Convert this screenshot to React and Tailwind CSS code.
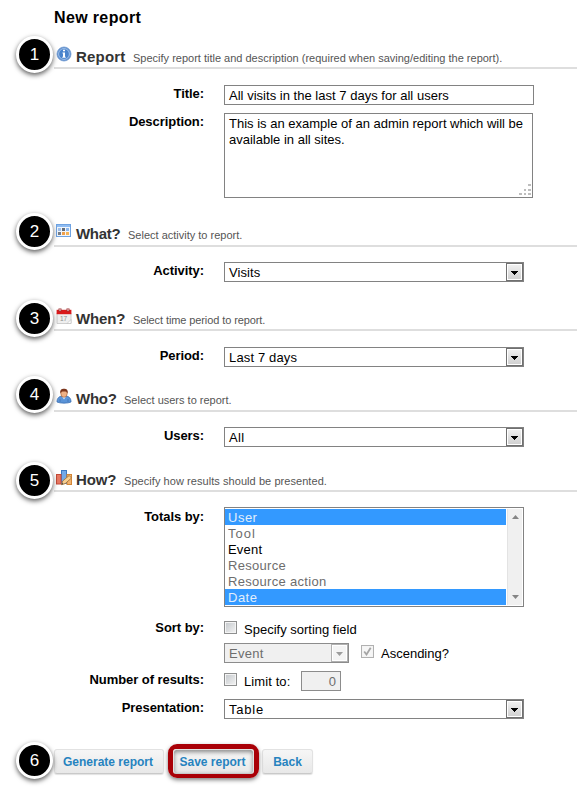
import React from "react";

const Badge = ({ n, top }) => (
  <div
    className={`absolute left-4 ${top} flex h-[37px] w-[37px] items-center justify-center rounded-full border-[3px] border-white bg-black text-[17px] leading-none text-white shadow-[0_2px_5px_rgba(0,0,0,0.65)]`}
  >
    {n}
  </div>
);

const InfoIcon = () => (
  <svg width="16" height="16" viewBox="0 0 16 16">
    <circle cx="8" cy="8" r="7" fill="#5d8fce" stroke="#6f98cf" strokeWidth="0.8" />
    <circle cx="8" cy="8" r="5.4" fill="#4a84cc" stroke="#a9c6ec" strokeWidth="0.9" />
    <path d="M7 3.8h2v1.500H7zM6.500 6.500H9v4.200h.7v1.100H6.300v-1.100H7V7.600h-.5z" fill="#fff" />
  </svg>
);

const TableIcon = () => (
  <svg width="16" height="16" viewBox="0 0 16 16" shapeRendering="crispEdges">
    <rect x="0" y="1" width="15" height="13" fill="#6fa3e2" />
    <rect x="1" y="2" width="13" height="2" fill="#8fbcf2" />
    <rect x="1" y="4" width="13" height="9" fill="#f1f6fc" />
    <rect x="2" y="5" width="3" height="3" fill="#9fc0ea" />
    <rect x="6" y="5" width="3" height="3" fill="#626b78" />
    <rect x="10" y="5" width="3" height="3" fill="#8db8ee" />
    <rect x="2" y="9" width="3" height="3" fill="#777e88" />
    <rect x="6" y="9" width="3" height="3" fill="#f0a04a" />
    <rect x="10" y="9" width="3" height="3" fill="#f5b357" />
  </svg>
);

const CalendarIcon = () => (
  <svg width="16" height="16" viewBox="0 0 16 16">
    <path d="M1 5h14v10.5H1z" fill="#efefef" stroke="#c4c4c4" strokeWidth="0.8" />
    <path d="M.6 1.800h14.800v4.400H.6z" fill="#d9191b" />
    <path d="M2.500.5h3v3h-3zM10.500.5h3v3h-3z" fill="#9d3436" />
    <path d="M3.500 1h1v2h-1zM11.500 1h1v2h-1z" fill="#f4dada" />
    <text x="4" y="13" fontSize="6.500" fill="#8e8e8e" fontFamily="Liberation Sans, sans-serif">17</text>
    <path d="M11 15.500l4-4v4z" fill="#fff" stroke="#bbb" strokeWidth="0.600" />
  </svg>
);

const UserIcon = () => (
  <svg width="16" height="16" viewBox="0 0 16 16">
    <path d="M1 14c0-4 2-5.500 5-6h4c3 .500 5 2 5 6-3 1.500-11 1.500-14 0z" fill="#5b94d8" stroke="#3a6fb2" strokeWidth="0.800" />
    <path d="M6 8.500l2 3 2-3z" fill="#dcebfa" />
    <path d="M4 11v3M12 11v3" stroke="#3a6fb2" strokeWidth="0.700" />
    <ellipse cx="8" cy="5.500" rx="3.200" ry="3.800" fill="#eeb186" stroke="#a55b2e" strokeWidth="0.600" />
    <path d="M4.300 5.500C3.700 2 5.500.700 8 .700s4.300 1.300 3.700 4.800C11 3.700 10 3.500 8 3.500s-3 .200-3.700 2z" fill="#7b351c" />
  </svg>
);

const ChartIcon = () => (
  <svg width="18" height="16" viewBox="0 0 18 16">
    <rect x="5.500" y="0.500" width="5" height="13" fill="#73a9e8" stroke="#3b78c4" />
    <rect x="0.500" y="4.500" width="4.500" height="9.500" fill="#e77862" stroke="#c44a38" />
    <rect x="11" y="4.500" width="4.500" height="10" fill="#f2b370" stroke="#d38637" />
    <path d="M5.500 14.700l1.200-3.700 6.500-5.500 2.300 2.500-6.300 5.600z" fill="#f7ce91" stroke="#a67538" strokeWidth="0.900" />
    <path d="M5.500 14.700l.6-1.900 1.300 1.300z" fill="#444" />
  </svg>
);

const Header = ({ icon, title, note, height, badge, badgeTop, iconClass, textClass }) => (
  <div className={`relative flex ${height} shrink-0 pl-[54px]`}>
    <div className="flex flex-1 items-end border-b-2 border-[#dedede]">
      <div className={`w-[22px] shrink-0 ${iconClass}`}>{icon}</div>
      <div className={`flex items-baseline whitespace-nowrap ${textClass}`}>
        {title}
        {note}
      </div>
    </div>
    <Badge n={badge} top={badgeTop} />
  </div>
);

const H = ({ children, className }) => (
  <h2 className={`shrink-0 text-[15px] font-bold leading-[18px] text-[#333] ${className}`}>{children}</h2>
);
const Note = ({ children, className = "" }) => (
  <span className={`text-[11px] leading-[14px] text-[#555] ${className}`}>{children}</span>
);

const Row = ({ label, className, labelClass = "pt-px", children }) => (
  <div className={`flex shrink-0 items-start ${className}`}>
    <div className={`w-[204px] shrink-0 whitespace-nowrap text-right text-[13px] font-bold leading-4 tracking-[-0.06px] text-black ${labelClass}`}>
      {label}
    </div>
    <div className="ml-5">{children}</div>
  </div>
);

const Select = ({ children, textClass = "" }) => (
  <div className="flex h-5 w-[300px] border border-[#828282] bg-white">
    <span className={`flex-1 pl-1 pt-px leading-[18px] ${textClass}`}>{children}</span>
    <span className="flex h-[18px] w-[17px] items-center justify-center border border-[#707070] bg-gradient-to-b from-[#f2f2f2] to-[#cfcfcf] shadow-[inset_0_0_0_1px_#fff]">
      <svg width="7" height="4" viewBox="0 0 7 4" className="mt-0.5">
        <path d="M0 0h7v1H6v1H5v1H4v1H3V3H2V2H1V1H0z" fill="#000" shapeRendering="crispEdges" />
      </svg>
    </span>
  </div>
);

const Check = ({ checked }) => (
  <span
    className={`flex h-[13px] w-[13px] shrink-0 items-center justify-center border shadow-[inset_0_0_0_1px_#f4f4f4] ${
      checked ? "border-[#b1b1b1] bg-[#f6f6f6]" : "border-[#8e8f8f] bg-gradient-to-br from-[#c3c7cb] to-[#f4f4f4]"
    }`}
  >
    {checked && (
      <svg width="9" height="9" viewBox="0 0 9 9">
        <path d="M1.200 4.500l2.300 3L7.700.8" fill="none" stroke="#a5a5a5" strokeWidth="1.800" />
      </svg>
    )}
  </span>
);

const options = [
  { name: "User", cls: "bg-[#3399ff] text-[#e2eefb] tracking-[0.5px]" },
  { name: "Tool", cls: "text-[#6d6d6d] tracking-[1px]" },
  { name: "Event", cls: "text-black tracking-[0.2px]" },
  { name: "Resource", cls: "text-[#6d6d6d] tracking-[0.3px]" },
  { name: "Resource action", cls: "text-[#6d6d6d] tracking-[0.3px]" },
  { name: "Date", cls: "bg-[#3399ff] text-[#e2eefb] tracking-[0.5px]" },
];

const Button = ({ children, className }) => (
  <button
    className={`h-[25px] shrink-0 whitespace-nowrap rounded-[3px] border border-[#e2e2e2] border-b-[#c9c9c9] bg-gradient-to-b from-[#f6f6f6] to-[#e8e8e8] text-[12px] font-bold leading-none text-[#2683bf] ${className}`}
  >
    {children}
  </button>
);

export default function App() {
  return (
    <div className="flex h-[790px] w-[577px] flex-col overflow-hidden bg-white font-['Liberation_Sans',Arial,sans-serif] text-[13px] text-black">
      <h1 className="h-[38px] shrink-0 pl-[54px] pt-2 text-[16px] font-bold leading-5 tracking-[0.36px]">New report</h1>

      <Header
        height="h-[31px]"
        badge="1"
        badgeTop="-top-0.5"
        icon={<InfoIcon />}
        iconClass="pl-0.5 pb-[5px]"
        textClass="pb-px"
        title={<H className="w-[57px] tracking-[0.2px]">Report</H>}
        note={<Note>Specify report title and description (required when saving/editing the report).</Note>}
      />
      <Row label="Title:" className="mt-4">
        <div className="h-5 w-[310px] border border-[#828282] pl-1 pt-px leading-[18px] tracking-[0.02px]">All visits in the last 7 days for all users</div>
      </Row>
      <Row label="Description:" className="mt-2">
        <div className="relative h-[85px] w-[309px] whitespace-nowrap border border-[#828282] pl-1 pt-0.5 leading-4">
          <div>This is an example of an admin report which will be</div>
          <div>available in all sites.</div>
          <svg width="12" height="12" viewBox="0 0 12 12" className="absolute bottom-px right-px" shapeRendering="crispEdges">
            <path d="M9 0h3v2H9zM5 5h2v2H5zM9 5h3v2H9zM0 9h3v2H0zM5 9h2v2H5zM9 9h3v2H9z" fill="#bdbdbd" />
          </svg>
        </div>
      </Row>

      <Header
        height="mt-[22px] h-[27px]"
        badge="2"
        badgeTop="-top-[7px]"
        icon={<TableIcon />}
        iconClass="pl-0.5 pb-1.5"
        textClass="pb-0.5"
        title={<H className="w-[52px] tracking-[-0.3px]">What?</H>}
        note={<Note>Select activity to report.</Note>}
      />
      <Row label="Activity:" className="mt-[15px]">
        <Select textClass="tracking-[0.1px]">Visits</Select>
      </Row>

      <Header
        height="mt-[22px] h-[27px]"
        badge="3"
        badgeTop="-top-[4px]"
        icon={<CalendarIcon />}
        iconClass="pl-0.5 pb-[5px]"
        textClass="pb-px"
        title={<H className="w-[57px] tracking-[-0.15px]">When?</H>}
        note={<Note className="tracking-[-0.1px]">Select time period to report.</Note>}
      />
      <Row label="Period:" className="mt-4">
        <Select textClass="tracking-[0.15px]">Last 7 days</Select>
      </Row>

      <Header
        height="mt-[18px] h-[27px]"
        badge="4"
        badgeTop="-top-[9px]"
        icon={<UserIcon />}
        iconClass="pl-0.5 pb-1.5"
        textClass="pb-0.5"
        title={<H className="w-[48px] tracking-[-0.25px]">Who?</H>}
        note={<Note>Select users to report.</Note>}
      />
      <Row label="Users:" className="mt-[15px]">
        <Select textClass="tracking-[0.3px]">All</Select>
      </Row>

      <Header
        height="mt-[18px] h-[27px]"
        badge="5"
        badgeTop="-top-[3px]"
        icon={<ChartIcon />}
        iconClass="pl-0.5 pb-1"
        textClass="pb-px"
        title={<H className="w-[48px] tracking-[-0.1px]">How?</H>}
        note={<Note className="tracking-[0.06px]">Specify how results should be presented.</Note>}
      />
      <Row label="Totals by:" className="mt-[15px]" labelClass="pt-0.5">
        <div className="flex h-[100px] w-[300px] border border-[#828282] p-px pl-0">
          <div className="w-[281px]">
            {options.map((o) => (
              <div key={o.name} className={`h-4 pl-[3px] leading-[18px] ${o.cls}`}>
                {o.name}
              </div>
            ))}
          </div>
          <div className="ml-px flex flex-1 flex-col items-center justify-between border-l border-[#e3e3e3] bg-[#f0f0f0] py-1.5">
            <svg width="7" height="4" viewBox="0 0 7 4">
              <path d="M0 4L3.500 0 7 4z" fill="#858585" />
            </svg>
            <svg width="7" height="4" viewBox="0 0 7 4">
              <path d="M0 0h7L3.500 4z" fill="#858585" />
            </svg>
          </div>
        </div>
      </Row>

      <Row label="Sort by:" className="mt-3.5 h-[22px]" labelClass="-mt-px">
        <div className="flex">
          <Check />
          <span className="ml-[7px] leading-[18px]">Specify sorting field</span>
        </div>
      </Row>
      <div className="flex h-7 shrink-0 pl-[224px]">
        <div className="flex h-5 w-[125px] border border-[#8c8c8c] bg-[#f0f0f0] text-[#6d6d6d]">
          <span className="flex-1 pl-1 pt-px leading-[18px] tracking-[0.3px]">Event</span>
          <span className="flex h-[18px] w-[17px] items-center justify-center border border-[#b1b1b1] bg-[#f4f4f4] shadow-[inset_0_0_0_1px_#fff]">
            <svg width="7" height="4" viewBox="0 0 7 4" className="mt-0.5">
              <path d="M0 0h7L3.500 4z" fill="#9c9c9c" />
            </svg>
          </span>
        </div>
        <div className="ml-3 flex pt-0.5">
          <Check checked />
          <span className="ml-[7px] leading-[18px]">Ascending?</span>
        </div>
      </div>
      <Row label="Number of results:" className="h-7" labelClass="pt-px">
        <div className="flex">
          <div className="flex w-[77px] pt-0.5">
            <Check />
            <span className="ml-[7px] leading-[18px] tracking-[0.1px]">Limit to:</span>
          </div>
          <div className="h-5 w-10 border border-[#8c8c8c] bg-[#f0f0f0] pr-1 pt-px text-right leading-[18px] text-[#6d6d6d]">0</div>
        </div>
      </Row>
      <Row label="Presentation:" className="h-5">
        <Select textClass="tracking-[0.8px]">Table</Select>
      </Row>

      <div className="relative mt-[25px] flex h-[34px] shrink-0 items-start pl-[54px]">
        <Button className="mt-[5px] w-[110px] pr-[2px] shadow-[0_1px_1px_rgba(0,0,0,0.12)]">Generate report</Button>
        <div className="relative ml-[4px] h-[34px] w-[91px] shrink-0 rounded-[9px] border-[5px] border-[#a90007] shadow-[0_2px_4px_rgba(0,0,0,0.5)]">
          <Button className="h-[24px] w-[81px] pr-[2px] shadow-[inset_0_2px_4px_rgba(0,0,0,0.45)]">Save report</Button>
        </div>
        <Button className="ml-[3px] mt-[5px] w-[51px] shadow-[0_1px_1px_rgba(0,0,0,0.12)]">Back</Button>
        <Badge n="6" top="-top-[2px]" />
      </div>
    </div>
  );
}
